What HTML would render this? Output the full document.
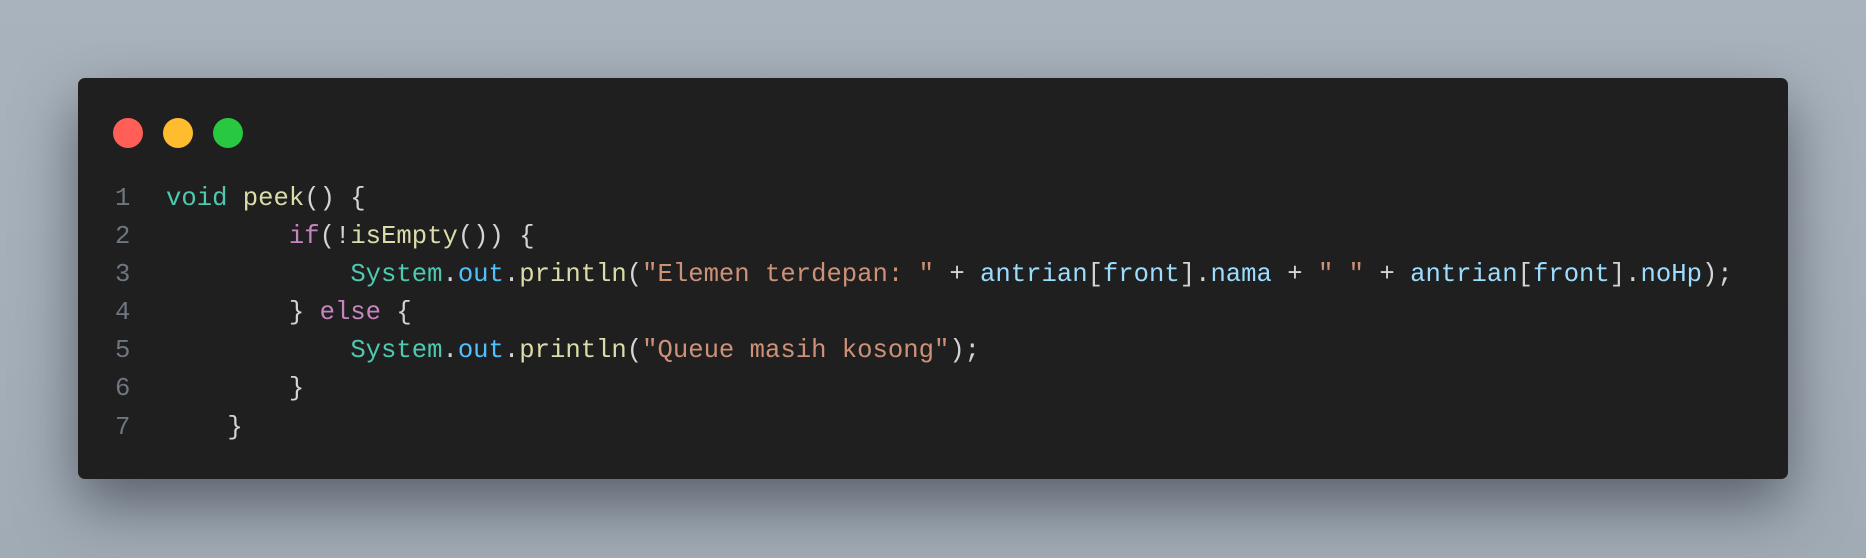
<!DOCTYPE html>
<html><head><meta charset="utf-8"><style>
html,body{margin:0;padding:0;}
body{width:1866px;height:558px;overflow:hidden;background:linear-gradient(180deg,#a9b3bd 0%,#a1abb5 100%);position:relative;font-family:"Liberation Mono",monospace;}
.card{position:absolute;left:78px;top:78px;width:1710px;height:401px;background:#1f1f1f;border-radius:7px;box-shadow:0 25px 60px rgba(30,35,45,0.55);}
.dot{position:absolute;top:118px;width:30px;height:30px;border-radius:50%;}
.code{position:absolute;left:0;top:180px;font-size:25.6px;line-height:38.1px;white-space:pre;color:#d4d4d4;}
.ln{position:absolute;top:0;left:115px;color:#6e7681;}
.tx{position:absolute;top:0;left:166px;}
.k{color:#4ec9b0}.f{color:#dcdcaa}.c{color:#c586c0}.o{color:#4fc1ff}.s{color:#ce9178}.v{color:#9cdcfe}
</style></head><body>
<div class="card"></div>
<div class="dot" style="left:113px;background:#ff5f57"></div>
<div class="dot" style="left:163px;background:#febc2e"></div>
<div class="dot" style="left:213px;background:#28c840"></div>
<div class="code"><div class="ln">1
2
3
4
5
6
7</div><div class="tx"><span class="k">void</span> <span class="f">peek</span>() {
        <span class="c">if</span>(!<span class="f">isEmpty</span>()) {
            <span class="k">System</span>.<span class="o">out</span>.<span class="f">println</span>(<span class="s">"Elemen terdepan: "</span> + <span class="v">antrian</span>[<span class="v">front</span>].<span class="v">nama</span> + <span class="s">" "</span> + <span class="v">antrian</span>[<span class="v">front</span>].<span class="v">noHp</span>);
        } <span class="c">else</span> {
            <span class="k">System</span>.<span class="o">out</span>.<span class="f">println</span>(<span class="s">"Queue masih kosong"</span>);
        }
    }</div></div>
</body></html>
